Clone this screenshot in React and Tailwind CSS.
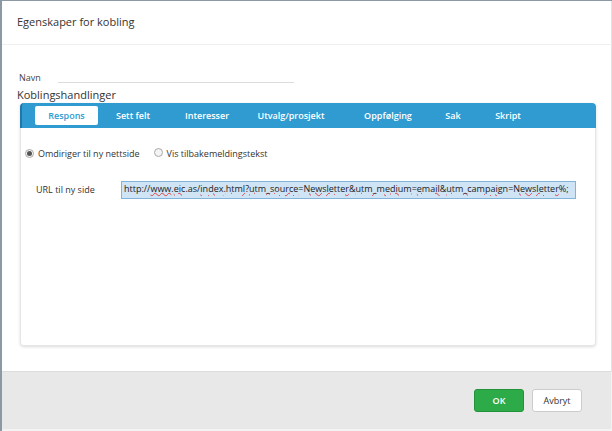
import React from 'react';

const FONT = { fontFamily: '"Open Sans", "Noto Sans", Arial, sans-serif' };

const tabs = [
  { label: 'Respons', w: 'w-[63px]', ml: 'ml-0', active: true },
  { label: 'Sett felt', w: 'w-[60px]', ml: 'ml-[5px]' },
  { label: 'Interesser', w: 'w-[60px]', ml: 'ml-[14px]' },
  { label: 'Utvalg/prosjekt', w: 'w-[80px]', ml: 'ml-[14px]' },
  { label: 'Oppfølging', w: 'w-[60px]', ml: 'ml-[27px]' },
  { label: 'Sak', w: 'w-[40px]', ml: 'ml-[15px]' },
  { label: 'Skript', w: 'w-[40px]', ml: 'ml-[15px]' },
];

const Squiggle = ({ children }) => (
  <span className="underline decoration-wavy decoration-[#e04040] decoration-1 underline-offset-[0px]">
    {children}
  </span>
);

const Radio = ({ checked }) => (
  <span className="inline-flex items-center justify-center w-[9px] h-[9px] rounded-full border border-[#a9a9a9] bg-[#f4f4f4]">
    {checked && <span className="w-[5px] h-[5px] rounded-full bg-[#555]" />}
  </span>
);

export default function App() {
  return (
    <div
      style={FONT}
      className="w-[612px] h-[431px] overflow-hidden bg-white border-l-2 border-t border-[#8b99a4] flex flex-col text-[#333]"
    >
      {/* header */}
      <div className="h-[44px] shrink-0 border-b border-[#efefef] flex items-center pl-[15px] border-r border-r-[#e2e2e2]">
        <span className="text-[11px] text-[#333]">Egenskaper for kobling</span>
      </div>

      {/* body */}
      <div className="flex-1 flex flex-col pl-[15px] pr-[15px] border-r border-[#e2e2e2]">
        <div className="flex items-end mt-[25px] h-[14px]">
          <span className="text-[9px] w-[41px] pl-[2px] text-[#444]">Navn</span>
          <div className="w-[236px] border-b border-[#dcdcdc] mb-[1px]" />
        </div>
        <div className="text-[11px] text-[#333] mt-[3px] leading-[15px]">Koblingshandlinger</div>

        <div className="ml-[3px] w-[576px] flex flex-col mt-[1px] shadow-[0_1px_3px_rgba(0,0,0,0.15)] rounded-b-[4px]">
          <div className="h-[25px] bg-[#2f9bd1] rounded-t-[4px] border-l-2 border-[#1f78aa] flex items-center pl-[13px]">
            {tabs.map((t) => (
              <div
                key={t.label}
                className={`${t.w} ${t.ml} h-[19px] flex items-center justify-center text-[9px] font-semibold whitespace-nowrap ${
                  t.active ? 'bg-white text-[#2f9bd1] rounded-[2px]' : 'text-white'
                }`}
              >
                {t.label}
              </div>
            ))}
          </div>

          <div className="h-[218px] bg-white border border-t-0 border-[#e6e6e6] rounded-b-[4px] flex flex-col">
            <div className="flex items-center mt-[19px] pl-[4px] text-[9px] text-[#333]">
              <Radio checked />
              <span className="ml-[4px]">Omdiriger til ny nettside</span>
              <span className="ml-[14px]">
                <Radio />
              </span>
              <span className="ml-[4px]">Vis tilbakemeldingstekst</span>
            </div>

            <div className="flex items-center mt-[20px] pl-[15px]">
              <span className="w-[85px] text-[9px] text-[#333]">URL til ny side</span>
              <div className="w-[455px] h-[18px] border border-[#82b3da] bg-[#cfe4f5] pl-[2px] pt-[1px] overflow-hidden whitespace-nowrap text-[9px] leading-[12px] text-[#222]">
                http://<Squiggle>www</Squiggle>.<Squiggle>eic</Squiggle>.as/<Squiggle>index</Squiggle>.
                <Squiggle>html</Squiggle>?<Squiggle>utm_source</Squiggle>=<Squiggle>Newsletter</Squiggle>&amp;
                <Squiggle>utm_medium</Squiggle>=<Squiggle>email</Squiggle>&amp;<Squiggle>utm_campaign</Squiggle>=
                <Squiggle>Newsletter</Squiggle>%;
              </div>
            </div>
          </div>
        </div>
      </div>

      {/* footer */}
      <div className="h-[60px] shrink-0 bg-[#e8e8e8] border-t border-[#dcdcdc] border-b-2 border-b-[#f3f3f3] border-r border-r-[#f3f3f3] flex items-center justify-end pr-[29px] gap-[8px]">
        <button className="w-[50px] h-[23px] rounded-[3px] bg-[#2eab49] border border-[#23933b] text-white text-[9px] font-semibold">
          OK
        </button>
        <button className="w-[50px] h-[23px] rounded-[3px] bg-white border border-[#cccccc] text-[#333] text-[9px]">
          Avbryt
        </button>
      </div>
    </div>
  );
}
